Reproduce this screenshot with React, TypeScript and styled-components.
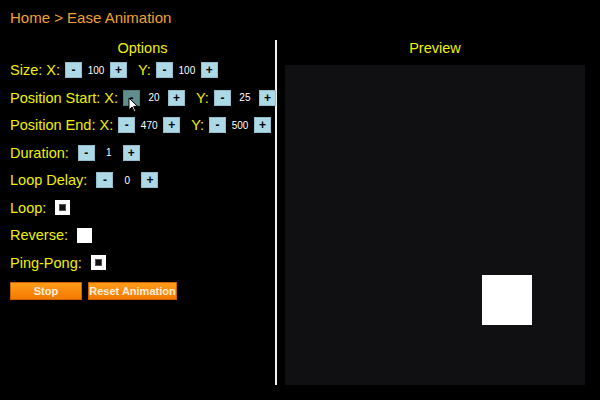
import React from "react";
import styled, { createGlobalStyle } from "styled-components";

const Global = createGlobalStyle`
  html, body { margin: 0; padding: 0; background: #000; }
  body { font-family: "Liberation Sans", Arial, sans-serif; width: 600px; height: 400px; overflow: hidden; }
`;

const Page = styled.div`
  width: 600px;
  height: 400px;
  box-sizing: border-box;
  padding: 8px 0 0 10px;
  display: flex;
  flex-direction: column;
`;

const Breadcrumb = styled.div`
  color: #f0a030;
  font-size: 15px;
  line-height: 20px;
  height: 20px;
  margin-bottom: 12px;
`;

const Main = styled.div`
  display: flex;
  height: 345px;
`;

const Left = styled.div`
  flex: none;
  width: 265px;
  min-width: 0;
  border-right: 2px solid #f2f2f2;
  display: flex;
  flex-direction: column;
  position: relative;
`;

const Right = styled.div`
  flex: none;
  width: 323px;
  box-sizing: border-box;
  display: flex;
  flex-direction: column;
  align-items: center;
  padding: 0 15px 0 8px;
`;

const Title = styled.div`
  color: #f0f000;
  font-size: 14.5px;
  line-height: 16px;
  text-align: center;
  width: 100%;
  margin: 0 0 4px 0;
`;

const PreviewTitle = styled(Title)`
  margin: 0 0 9px 0;
`;

const PreviewBox = styled.div`
  width: 300px;
  height: 320px;
  flex: none;
  background: #100f12;
  position: relative;
`;

const Square = styled.div`
  position: absolute;
  background: #fff;
  width: 50px;
  height: 50px;
`;

const Row = styled.div`
  display: flex;
  align-items: center;
  height: 20px;
  margin-bottom: 7.5px;
  white-space: nowrap;
`;

const Label = styled.span<{ $gap?: number }>`
  color: #f0f000;
  font-size: 14.5px;
  margin-right: ${(p) => p.$gap ?? 5}px;
`;

const SubLabel = styled(Label)`
  margin-left: 11px;
`;

const StepButton = styled.div<{ $hover?: boolean }>`
  width: 17px;
  height: 16px;
  box-sizing: border-box;
  background: ${(p) => (p.$hover ? "#5f8e8c" : "#add8e6")};
  border: 1px solid ${(p) => (p.$hover ? "#4f7c7a" : "#93bccb")};
  color: #000;
  font-size: 12px;
  font-weight: bold;
  display: flex;
  align-items: center;
  justify-content: center;
  line-height: 1;
  flex: none;
`;

const Value = styled.span`
  width: 28px;
  text-align: center;
  color: #fff;
  font-size: 10px;
  flex: none;
`;

const Check = styled.div<{ $on?: boolean }>`
  width: 15px;
  height: 15px;
  background: #fff;
  display: flex;
  align-items: center;
  justify-content: center;
  flex: none;
  &::after {
    content: "";
    display: ${(p) => (p.$on ? "block" : "none")};
    width: 7px;
    height: 7px;
    box-sizing: border-box;
    background: #111;
    border: 1px solid #555;
  }
`;

const ActionRow = styled.div`
  display: flex;
  gap: 6px;
  margin-top: 2px;
`;

const ActionButton = styled.div<{ $w: number }>`
  width: ${(p) => p.$w}px;
  height: 18px;
  box-sizing: border-box;
  background: linear-gradient(#ff9c1a, #f57a00);
  border: 1px solid #c86200;
  color: #ffeedd;
  font-size: 11px;
  font-weight: bold;
  display: flex;
  align-items: center;
  justify-content: center;
`;

const Cursor = styled.svg`
  position: absolute;
  left: 118px;
  top: 57px;
  pointer-events: none;
`;

type StepProps = { value: string; hoverMinus?: boolean };
const Stepper = ({ value, hoverMinus }: StepProps) => (
  <>
    <StepButton $hover={hoverMinus}>-</StepButton>
    <Value>{value}</Value>
    <StepButton>+</StepButton>
  </>
);

export default function App() {
  return (
    <>
      <Global />
      <Page>
        <Breadcrumb>Home &gt; Ease Animation</Breadcrumb>
        <Main>
          <Left>
            <Title>Options</Title>
            <Row>
              <Label>Size: X:</Label>
              <Stepper value="100" />
              <SubLabel>Y:</SubLabel>
              <Stepper value="100" />
            </Row>
            <Row>
              <Label>Position Start: X:</Label>
              <Stepper value="20" hoverMinus />
              <SubLabel>Y:</SubLabel>
              <Stepper value="25" />
            </Row>
            <Row>
              <Label>Position End: X:</Label>
              <Stepper value="470" />
              <SubLabel>Y:</SubLabel>
              <Stepper value="500" />
            </Row>
            <Row>
              <Label $gap={9}>Duration:</Label>
              <Stepper value="1" />
            </Row>
            <Row>
              <Label $gap={9}>Loop Delay:</Label>
              <Stepper value="0" />
            </Row>
            <Row>
              <Label $gap={9}>Loop:</Label>
              <Check $on />
            </Row>
            <Row>
              <Label $gap={9}>Reverse:</Label>
              <Check />
            </Row>
            <Row>
              <Label $gap={9}>Ping-Pong:</Label>
              <Check $on />
            </Row>
            <ActionRow>
              <ActionButton $w={72}>Stop</ActionButton>
              <ActionButton $w={89}>Reset Animation</ActionButton>
            </ActionRow>
            <Cursor width="10" height="16" viewBox="0 0 10 16">
              <path d="M1 1 L1 13 L4 10 L6.5 15 L8 14.3 L5.6 9.4 L9.5 9.4 Z" fill="#fff" stroke="#000" strokeWidth="1" />
            </Cursor>
          </Left>
          <Right>
            <PreviewTitle>Preview</PreviewTitle>
            <PreviewBox>
              <Square style={{ left: 197, top: 210 }} />
            </PreviewBox>
          </Right>
        </Main>
      </Page>
    </>
  );
}
